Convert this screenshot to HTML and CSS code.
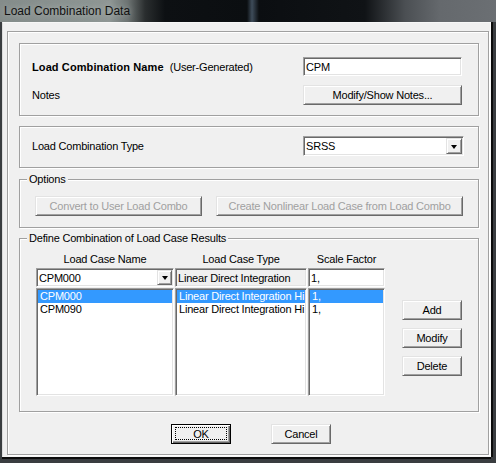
FILE: index.html
```html
<!DOCTYPE html>
<html>
<head>
<meta charset="utf-8">
<link rel="stylesheet" href="styles.css">
</head>
<body>
<div class="titlebar"><span class="title">Load Combination Data</span></div>
<div class="client">
  <div class="frame">
    <div class="group g-name">
      <div class="row">
        <span class="lbl"><b>Load Combination Name</b><span class="sub">(User-Generated)</span></span>
        <div class="edit name-edit">CPM</div>
      </div>
      <div class="row row2">
        <span class="lbl">Notes</span>
        <div class="btn notes-btn">Modify/Show Notes...</div>
      </div>
    </div>

    <div class="group g-type">
      <span class="lbl">Load Combination Type</span>
      <div class="combo type-combo"><span class="combo-text">SRSS</span><span class="drop"><span class="tri"></span></span></div>
    </div>

    <fieldset class="fs g-options">
      <legend>Options</legend>
      <div class="options-body">
        <div class="btn disabled b-convert">Convert to User Load Combo</div>
        <div class="btn disabled b-create">Create Nonlinear Load Case from Load Combo</div>
      </div>
    </fieldset>

    <fieldset class="fs g-define">
      <legend>Define Combination of Load Case Results</legend>
      <div class="define-body">
        <div class="cols">
          <div class="col c1">
            <div class="hdr">Load Case Name</div>
            <div class="combo small-combo"><span class="combo-text">CPM000</span><span class="drop small-drop"><span class="tri"></span></span></div>
            <div class="list">
              <div class="item sel">CPM000</div>
              <div class="item">CPM090</div>
            </div>
          </div>
          <div class="col c2">
            <div class="hdr">Load Case Type</div>
            <div class="edit ro-edit">Linear Direct Integration</div>
            <div class="list">
              <div class="item sel">Linear Direct Integration Hi</div>
              <div class="item">Linear Direct Integration Hi</div>
            </div>
          </div>
          <div class="col c3">
            <div class="hdr">Scale Factor</div>
            <div class="edit sf-edit">1,</div>
            <div class="list">
              <div class="item sel">1,</div>
              <div class="item">1,</div>
            </div>
          </div>
        </div>
        <div class="side-btns">
          <div class="btn side-btn">Add</div>
          <div class="btn side-btn">Modify</div>
          <div class="btn side-btn">Delete</div>
        </div>
      </div>
    </fieldset>

    <div class="footer">
      <div class="btn default ok-btn"><span class="focus">OK</span></div>
      <div class="btn cancel-btn">Cancel</div>
    </div>
  </div>
</div>
</body>
</html>
```
FILE: styles.css
```css
html, body {
  margin: 0;
  padding: 0;
}
body {
  width: 496px;
  height: 463px;
  overflow: hidden;
  background: #3a3d40;
  font-family: "Liberation Sans", Arial, sans-serif;
  font-size: 11px;
  letter-spacing: -0.2px;
  color: #000;
}
.titlebar {
  height: 22px;
  box-sizing: border-box;
  padding-left: 4px;
  display: flex;
  align-items: center;
  background: linear-gradient(to right, #858c8a 0px, #8f9694 110px, #6d7372 128px, #2a2e2f 145px, #0d1013 165px, #0b0e11 247px, #3e4c5a 252px, #0b0e11 259px, #101316 365px, #4b4f53 405px, #65696d 440px, #6b6f73 496px);
}
.title {
  font-family: "Liberation Sans", Arial, sans-serif;
  font-size: 12px;
  letter-spacing: 0;
  color: #111;
  text-shadow: 0 0 6px rgba(210, 220, 215, 0.6);
}
.client {
  margin-left: 2px;
  width: 489px;
  height: 435px;
  box-sizing: border-box;
  border: 1px solid;
  border-color: #f7f7f7 #f7f7f7 #f4f4f4 #dcdcdc;
  background: #f0f0f0;
  padding: 8px 0 0 4px;
  box-shadow: 1px 0 0 #0c0c0c, 2px 0 0 #0c0c0c, 0 1px 0 #0c0c0c, 0 2px 0 #0c0c0c;
}
.frame {
  width: 482px;
  height: 424px;
  box-sizing: border-box;
  border: 1px solid #a0a0a0;
  box-shadow: inset 1px 1px 0 #fff, 1px 1px 0 #fff;
  padding: 11px 9px 0 11px;
}
.group {
  box-sizing: border-box;
  border: 1px solid #a0a0a0;
  box-shadow: inset 1px 1px 0 #fff, 1px 1px 0 #fff;
}
.fs {
  margin: 0;
  padding: 0;
  min-width: 0;
  border: 1px solid #a0a0a0;
  box-shadow: inset 1px 1px 0 #fff, 1px 1px 0 #fff;
}
.fs legend {
  margin-left: 7px;
  padding: 0 2px;
  line-height: 13px;
  height: 13px;
  background: #f0f0f0;
}
.row {
  display: flex;
  align-items: center;
  justify-content: space-between;
}
.row2 {
  margin-top: 9px;
}
.lbl b {
  font-weight: bold;
  letter-spacing: 0.1px;
}
.sub {
  margin-left: 6px;
}
.g-name {
  padding: 13px 14px 10px 12px;
}
.g-type {
  margin-top: 10px;
  padding: 9px 14px 11px 12px;
  display: flex;
  align-items: center;
  justify-content: space-between;
}
.g-options {
  margin-top: 5px;
}
.g-define {
  margin-top: 4px;
}
.options-body {
  display: flex;
  gap: 14px;
  padding: 10px 0 11px 15px;
}
.define-body {
  display: flex;
  padding: 7px 0 15px 16px;
}

/* controls */
.edit, .combo, .list {
  box-sizing: border-box;
  border: 1px solid;
  border-color: #a0a0a0 #fff #fff #a0a0a0;
  box-shadow: inset 1px 1px 0 #696969, inset -1px -1px 0 #e3e3e3;
  background: #fff;
  white-space: nowrap;
  overflow: hidden;
}
.edit {
  padding: 1px 2px;
  display: flex;
  align-items: center;
}
.name-edit {
  width: 159px;
  height: 19px;
  margin-right: 2px;
}
.combo {
  display: flex;
  align-items: stretch;
  padding: 1px;
}
.combo-text {
  flex: 1;
  display: flex;
  align-items: center;
  padding-left: 1px;
}
.type-combo {
  width: 161px;
  height: 20px;
}
.drop {
  width: 16px;
  box-sizing: border-box;
  background: #f0f0f0;
  border: 1px solid;
  border-color: #e3e3e3 #696969 #696969 #e3e3e3;
  box-shadow: inset 1px 1px 0 #fff, inset -1px -1px 0 #a0a0a0;
  display: flex;
  align-items: center;
  justify-content: center;
}
.small-drop {
  width: 15px;
}
.tri {
  width: 0;
  height: 0;
  border-left: 3.5px solid transparent;
  border-right: 3.5px solid transparent;
  border-top: 4px solid #000;
  margin-top: 1px;
}

.btn {
  box-sizing: border-box;
  height: 20px;
  background: #f0f0f0;
  border: 1px solid;
  border-color: #e3e3e3 #696969 #696969 #e3e3e3;
  box-shadow: inset 1px 1px 0 #fff, inset -1px -1px 0 #a0a0a0;
  display: flex;
  align-items: center;
  justify-content: center;
  white-space: nowrap;
}
.notes-btn {
  width: 159px;
  margin-right: 2px;
}
.disabled {
  color: #a0a0a0;
}
.b-convert {
  width: 167px;
}
.b-create {
  width: 247px;
}

/* define area */
.cols {
  display: flex;
  gap: 1px;
}
.c1 { width: 138px; }
.c2 { width: 132px; }
.c3 { width: 77px; }
.hdr {
  line-height: 14px;
  height: 14px;
  text-align: center;
  white-space: nowrap;
}
.small-combo {
  margin-top: 2px;
  height: 19px;
}
.ro-edit, .sf-edit {
  margin-top: 2px;
  height: 19px;
}
.ro-edit {
  background: #f0f0f0;
}
.list {
  margin-top: 1px;
  height: 108px;
  padding: 1px;
}
.item {
  height: 13px;
  line-height: 13px;
  padding-left: 2px;
  overflow: hidden;
  white-space: nowrap;
}
.item.sel {
  background: #3399ff;
  color: #fff;
}
.side-btns {
  margin-left: 17px;
  margin-top: 48px;
  display: flex;
  flex-direction: column;
  gap: 8px;
}
.side-btn {
  width: 60px;
}

/* footer */
.footer {
  display: flex;
  margin-top: 12px;
  padding-left: 152px;
  gap: 40px;
}
.ok-btn, .cancel-btn {
  width: 60px;
}
.default {
  border: 1px solid #000;
  box-shadow: inset 1px 1px 0 #fff, inset -1px -1px 0 #696969, inset -2px -2px 0 #a0a0a0;
  padding: 2px 3px 3px 3px;
  align-items: stretch;
}
.focus {
  flex: 1;
  border: 1px dotted #000;
  display: flex;
  align-items: center;
  justify-content: center;
}
```
